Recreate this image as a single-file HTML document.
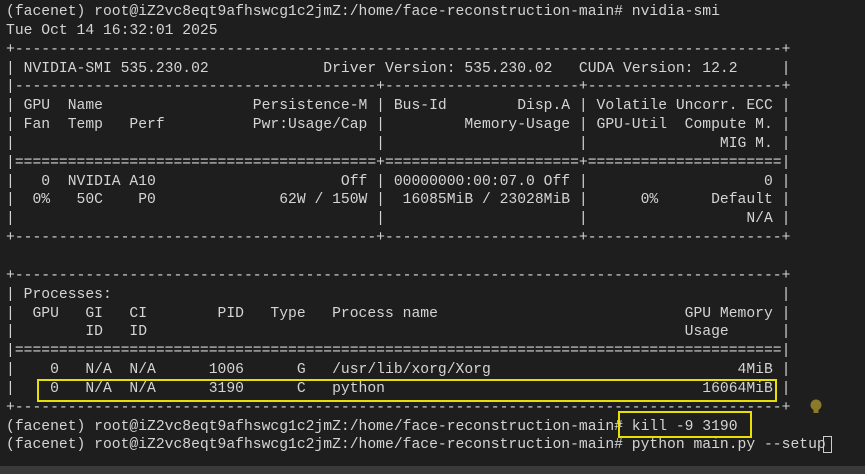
<!DOCTYPE html>
<html><head><meta charset="utf-8"><style>
html,body{margin:0;padding:0;}
body{width:865px;height:474px;background:#1e1e1e;overflow:hidden;position:relative;}
pre{margin:0;position:absolute;left:6px;top:3px;font-family:"Liberation Mono",monospace;font-size:14.7px;line-height:18.85px;color:#d4d4d4;white-space:pre;}
.box{position:absolute;border:2px solid #e8e000;box-sizing:border-box;}
.bar{position:absolute;left:0;top:466px;width:865px;height:8px;background:#3a3a3a;}
.cur{position:absolute;left:823px;top:436px;width:9px;height:17px;border:1px solid #cccccc;box-sizing:border-box;}
</style></head><body>
<pre>(facenet) root@iZ2vc8eqt9afhswcg1c2jmZ:/home/face-reconstruction-main# nvidia-smi
Tue Oct 14 16:32:01 2025
+---------------------------------------------------------------------------------------+
| NVIDIA-SMI 535.230.02             Driver Version: 535.230.02   CUDA Version: 12.2     |
|-----------------------------------------+----------------------+----------------------+
| GPU  Name                 Persistence-M | Bus-Id        Disp.A | Volatile Uncorr. ECC |
| Fan  Temp   Perf          Pwr:Usage/Cap |         Memory-Usage | GPU-Util  Compute M. |
|                                         |                      |               MIG M. |
|=========================================+======================+======================|
|   0  NVIDIA A10                     Off | 00000000:00:07.0 Off |                    0 |
|  0%   50C    P0              62W / 150W |  16085MiB / 23028MiB |      0%      Default |
|                                         |                      |                  N/A |
+-----------------------------------------+----------------------+----------------------+

+---------------------------------------------------------------------------------------+
| Processes:                                                                            |
|  GPU   GI   CI        PID   Type   Process name                            GPU Memory |
|        ID   ID                                                             Usage      |
|=======================================================================================|
|    0   N/A  N/A      1006      G   /usr/lib/xorg/Xorg                            4MiB |
|    0   N/A  N/A      3190      C   python                                    16064MiB |
+---------------------------------------------------------------------------------------+
(facenet) root@iZ2vc8eqt9afhswcg1c2jmZ:/home/face-reconstruction-main# kill -9 3190
(facenet) root@iZ2vc8eqt9afhswcg1c2jmZ:/home/face-reconstruction-main# python main.py --setup</pre>
<div class="box" style="left:37px;top:379px;width:740px;height:23px;"></div>
<div class="box" style="left:618px;top:411px;width:134px;height:27px;"></div>
<div class="cur"></div>
<svg style="position:absolute;left:808px;top:398px" width="16" height="18" viewBox="0 0 16 18"><circle cx="8" cy="7" r="5.5" fill="#8a7a2a"/><rect x="5.5" y="11" width="5" height="4" fill="#8a7a2a"/></svg>
<div class="bar"></div>
</body></html>
